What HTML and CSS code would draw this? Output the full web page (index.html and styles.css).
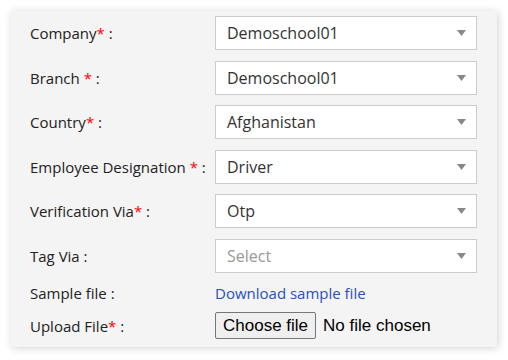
FILE: index.html
```html
<!DOCTYPE html>
<html lang="en">
<head>
  <meta charset="UTF-8" />
  <meta name="viewport" content="width=device-width, initial-scale=1" />
  <title>Employee Upload</title>
  <link rel="stylesheet" href="styles.css">
</head>
<body>

  <div class="panel">
    <div class="form-row">
      <label class="form-label">Company<span class="req">*</span> :</label>
      <div class="select">
        <span>Demoschool01</span>
        <svg class="caret" width="9" height="6" viewBox="0 0 9 6"><path d="M0 0h9L4.5 6z" fill="#888"/></svg>
      </div>
    </div>

    <div class="form-row">
      <label class="form-label">Branch <span class="req">*</span> :</label>
      <div class="select">
        <span>Demoschool01</span>
        <svg class="caret" width="9" height="6" viewBox="0 0 9 6"><path d="M0 0h9L4.5 6z" fill="#888"/></svg>
      </div>
    </div>

    <div class="form-row">
      <label class="form-label">Country<span class="req">*</span> :</label>
      <div class="select">
        <span>Afghanistan</span>
        <svg class="caret" width="9" height="6" viewBox="0 0 9 6"><path d="M0 0h9L4.5 6z" fill="#888"/></svg>
      </div>
    </div>

    <div class="form-row">
      <label class="form-label">Employee Designation <span class="req">*</span> :</label>
      <div class="select">
        <span>Driver</span>
        <svg class="caret" width="9" height="6" viewBox="0 0 9 6"><path d="M0 0h9L4.5 6z" fill="#888"/></svg>
      </div>
    </div>

    <div class="form-row">
      <label class="form-label">Verification Via<span class="req">*</span> :</label>
      <div class="select">
        <span>Otp</span>
        <svg class="caret" width="9" height="6" viewBox="0 0 9 6"><path d="M0 0h9L4.5 6z" fill="#888"/></svg>
      </div>
    </div>

    <div class="form-row">
      <label class="form-label">Tag Via :</label>
      <div class="select placeholder">
        <span>Select</span>
        <svg class="caret" width="9" height="6" viewBox="0 0 9 6"><path d="M0 0h9L4.5 6z" fill="#888"/></svg>
      </div>
    </div>

    <div class="form-row small">
      <label class="form-label">Sample file :</label>
      <a href="#" class="download-link">Download sample file</a>
    </div>

    <div class="form-row upload">
      <label class="form-label">Upload File<span class="req">*</span> :</label>
      <div class="file-input">
        <button type="button" class="file-btn">Choose file</button>
        <span class="file-name">No file chosen</span>
      </div>
    </div>
  </div>

</body>
</html>
```

FILE: styles.css
```css
* {
  box-sizing: border-box;
}
body {
  margin: 0;
  padding: 11px;
  background: #fff;
  font-family: 'Open Sans', sans-serif;
  color: #222;
}

.panel {
  width: 486px;
  height: 336px;
  background: #f4f4f4;
  padding: 5px 20px 8px 19px;
  box-shadow: 1px 1px 8px rgb(0 0 0 / 0.18);
}

.form-row {
  display: flex;
  align-items: center;
  height: 34px;
  margin-bottom: 10.5px;
}
.form-row.small {
  height: 20px;
  margin-bottom: 9px;
}
.form-row.upload {
  height: 27px;
  margin-bottom: 0;
}

.form-label {
  width: 185px;
  flex-shrink: 0;
  font-size: 15px;
  color: #222;
}
.req {
  color: #f00;
}

.select {
  flex: 1;
  height: 34px;
  display: flex;
  align-items: center;
  justify-content: space-between;
  background: #fff;
  border: 1px solid #ccc;
  padding: 0 10px 0 11px;
  font-size: 16px;
  color: #333;
}
.select.placeholder {
  color: #999;
}
.caret {
  display: block;
}

.download-link {
  font-size: 15px;
  color: #2a4fbf;
  text-decoration: none;
}

.file-input {
  display: flex;
  align-items: center;
  font-family: 'Liberation Sans', Arial, sans-serif;
  font-size: 17px;
}
.file-btn {
  height: 27px;
  padding: 0 7px;
  background: #efefef;
  border: 1px solid #767676;
  border-radius: 2px;
  font-family: 'Liberation Sans', Arial, sans-serif;
  font-size: 17px;
  color: #000;
}
.file-name {
  margin-left: 7px;
  color: #000;
}
```
